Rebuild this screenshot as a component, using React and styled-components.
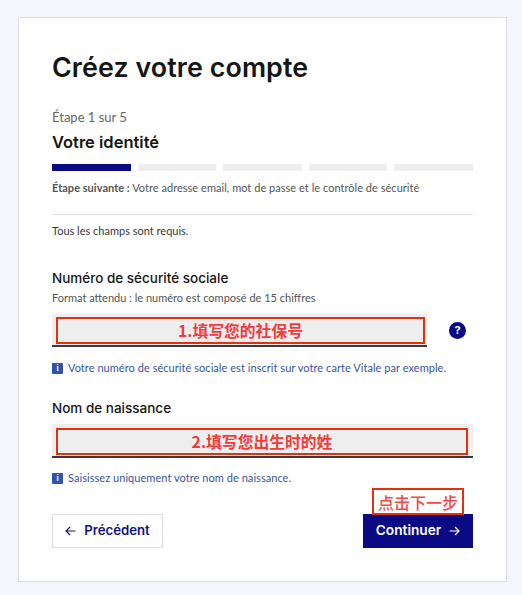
import React from 'react'
import styled, { createGlobalStyle } from 'styled-components'

const GlobalStyle = createGlobalStyle`
    html, body {
        margin: 0;
        background: #f5f5fe;
    }
    body {
        font-family: 'Lato', 'Noto Sans CJK SC', sans-serif;
        color: #161616;
    }
`

const Page = styled.div`
    width: 522px;
    height: 595px;
    box-sizing: border-box;
    padding: 17px 15px 13px 18px;
    overflow: hidden;
`

const Card = styled.main`
    height: 565px;
    box-sizing: border-box;
    background: #fff;
    border: 1px solid #dddde3;
    padding: 32px 33px 0 33px;
`

const Title = styled.h1`
    margin: 0;
    font: 600 26.8px/34px 'Inter', sans-serif;
    letter-spacing: 0.1px;
    color: #161616;
`

const StepLabel = styled.div`
    margin-top: 24px;
    font-size: 13px;
    line-height: 18px;
    color: #666;
`

const StepTitle = styled.h2`
    margin: 4px 0 0;
    font: 600 16.5px/24px 'Inter', sans-serif;
    color: #161616;
`

const Steps = styled.div`
    margin-top: 10px;
    display: grid;
    grid-template-columns: repeat(5, 1fr);
    gap: 7px;
`

const Step = styled.div`
    height: 7px;
    background: ${(p) => (p.$active ? '#0a0a85' : '#eeeeee')};
`

const NextStep = styled.p`
    margin: 9px 0 0;
    font-size: 11px;
    line-height: 16px;
    letter-spacing: 0.03px;
    color: #555;

    b {
        font-weight: 700;
    }
`

const Divider = styled.hr`
    margin: 18px 0 0;
    border: 0;
    border-top: 1px solid #e3e3e3;
`

const Required = styled.p`
    margin: 8px 0 0;
    font-size: 11px;
    line-height: 16px;
    color: #3a3a3a;
`

const Label = styled.label`
    display: block;
    margin-top: ${(p) => p.$top}px;
    font: 500 13.5px/20px 'Inter', sans-serif;
    color: #161616;
`

const Hint = styled.div`
    margin-top: 2px;
    font-size: 11px;
    line-height: 16px;
    color: #555;
`

const InputRow = styled.div`
    margin-top: ${(p) => p.$top}px;
    display: flex;
    align-items: center;
`

const InputBox = styled.div`
    position: relative;
    width: ${(p) => p.$width}px;
    height: ${(p) => p.$height}px;
    box-sizing: border-box;
    background: #eeeeee;
    border-bottom: 2px solid #3a3a3a;
`

const Callout = styled.div`
    position: absolute;
    left: 4px;
    top: ${(p) => p.$top}px;
    width: ${(p) => p.$width}px;
    height: 27px;
    box-sizing: border-box;
    border: 2px solid #e2310f;
    display: flex;
    align-items: center;
    justify-content: center;
    font: 700 15.8px/1 'Noto Sans CJK SC', sans-serif;
    color: #f23b3b;
`

const HelpBadge = styled.span`
    margin-left: 22px;
    width: 17px;
    height: 17px;
    border-radius: 50%;
    background: #0a0a85;
    color: #fff;
    display: flex;
    align-items: center;
    justify-content: center;
    font: 700 11px/1 'Inter', sans-serif;
`

const Info = styled.div`
    margin-top: ${(p) => p.$top}px;
    display: flex;
    align-items: center;
    gap: 5px;
    font-size: 11px;
    line-height: 16px;
    letter-spacing: 0.05px;
    color: #3a55a0;
`

const InfoIcon = styled.span`
    width: 11px;
    height: 11px;
    border-radius: 1px;
    background: #2f55a8;
    color: #fff;
    display: flex;
    align-items: center;
    justify-content: center;
    font: 700 8px/1 'Inter', sans-serif;
`

const Actions = styled.div`
    margin-top: 28px;
    display: flex;
    justify-content: space-between;
`

const Button = styled.button`
    position: relative;
    height: 34px;
    box-sizing: border-box;
    padding: 0;
    width: ${(p) => p.$width}px;
    display: flex;
    align-items: center;
    justify-content: center;
    gap: 8px;
    font: 600 ${(p) => (p.$primary ? 13.7 : 13.2)}px/1 'Inter', sans-serif;
    border: 1px solid ${(p) => (p.$primary ? '#0a0a85' : '#dddde3')};
    background: ${(p) => (p.$primary ? '#0a0a85' : '#fff')};
    color: ${(p) => (p.$primary ? '#fff' : '#14147e')};
`

const NextCallout = styled.div`
    position: absolute;
    left: 8px;
    top: -27px;
    width: 92px;
    height: 27px;
    box-sizing: border-box;
    background: #fff;
    border: 2px solid #e2310f;
    display: flex;
    align-items: center;
    justify-content: center;
    font: 500 16px/1 'Noto Sans CJK SC', sans-serif;
    color: #f04a4a;
`

const Arrow = ({ left }) => (
    <svg width="11" height="10" viewBox="0 0 11 10" fill="none" stroke="currentColor" strokeWidth="1.2">
        {left ? <path d="M10.5 5H1M5 1L1 5l4 4" /> : <path d="M.5 5H10M6 1l4 4-4 4" />}
    </svg>
)

const App = () => {
    return (
        <Page>
            <GlobalStyle />
            <Card>
                <Title>Créez votre compte</Title>
                <StepLabel>Étape 1 sur 5</StepLabel>
                <StepTitle>Votre identité</StepTitle>
                <Steps>
                    {[0, 1, 2, 3, 4].map((i) => (
                        <Step key={i} $active={i === 0} />
                    ))}
                </Steps>
                <NextStep>
                    <b>Étape suivante :</b> Votre adresse email, mot de passe et le contrôle de sécurité
                </NextStep>
                <Divider />
                <Required>Tous les champs sont requis.</Required>

                <Label $top={29}>Numéro de sécurité sociale</Label>
                <Hint>Format attendu : le numéro est composé de 15 chiffres</Hint>
                <InputRow $top={8}>
                    <InputBox $width={375} $height={33}>
                        <Callout $width={369} $top={3}>1.填写您的社保号</Callout>
                    </InputBox>
                    <HelpBadge>?</HelpBadge>
                </InputRow>
                <Info $top={13}>
                    <InfoIcon>i</InfoIcon>
                    Votre numéro de sécurité sociale est inscrit sur votre carte Vitale par exemple.
                </Info>

                <Label $top={22}>Nom de naissance</Label>
                <InputRow $top={6}>
                    <InputBox $width={421} $height={34}>
                        <Callout $width={412} $top={4}>2.填写您出生时的姓</Callout>
                    </InputBox>
                </InputRow>
                <Info $top={12}>
                    <InfoIcon>i</InfoIcon>
                    Saisissez uniquement votre nom de naissance.
                </Info>

                <Actions>
                    <Button $width={111}>
                        <Arrow left />
                        Précédent
                    </Button>
                    <Button $primary $width={110}>
                        <NextCallout>点击下一步</NextCallout>
                        Continuer
                        <Arrow />
                    </Button>
                </Actions>
            </Card>
        </Page>
    )
}

export default App
